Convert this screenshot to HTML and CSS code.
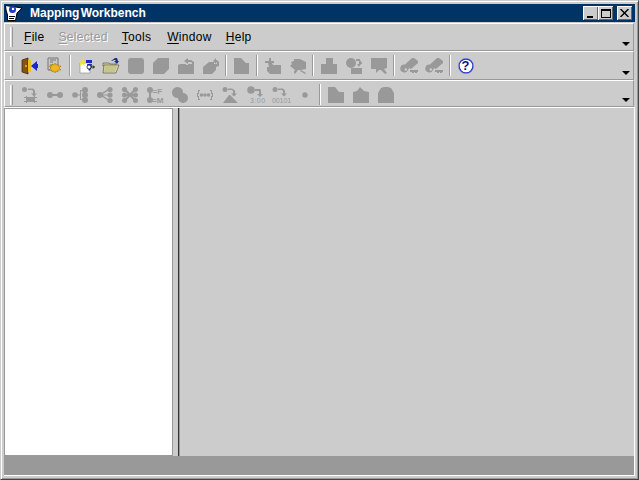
FILE: index.html
```html
<!DOCTYPE html>
<html lang="en">
<head>
<meta charset="utf-8">
<title>Mapping Workbench</title>
<link rel="stylesheet" href="styles.css">
</head>
<body>
<svg class="defs" width="0" height="0" aria-hidden="true">
  <defs>
    <g id="square"><rect x="0" y="0" width="16" height="16" rx="3"/></g>
    <g id="octa"><path d="M5 0h11v11l-5 5H0V5z"/></g>
    <g id="save"><path d="M0 7l2-1h6v1h2V6h6v10H0zM6 3l4-3v2h3l3 2v3h-2V5l-1-1h-3v2z"/></g>
    <g id="saveall"><path d="M0 9l6-5h5v2h5v2l-3 1v3l-4 4H0zM10 3l3-3v2h1l2 2v4h-2V5l-1-1v2z"/></g>
    <g id="doc"><path d="M0 0h7l5 5h3v11H0z"/></g>
    <g id="addtbl"><path d="M4 0h2v3h3v2H7l1 2h8v9H5l-3-3V9h2L3 5H0V3h4z"/></g>
    <g id="cam"><path d="M4 1l6 0 6 3v7l-5 1H5L0 8l2-2-1-2 3-1zM4 13l3-2 1 1-3 4-1-1zM11 12l5 3-1 1-5-3z"/></g>
    <g id="folder"><path d="M0 6h5V0h7v6h4v10H0z"/></g>
    <g id="bundle"><circle cx="5" cy="5" r="5"/><path d="M10 1h4v1l2 3v1h-1l-2 3-2-3h2V3h-3zM5 10h5l3 0h3v6H5z"/></g>
    <g id="chat"><path d="M0 0h16v10l-3 1 3 4-2 1-4-4H8l-3 3v-4H0z"/></g>
    <g id="key"><path d="M10 0h2l4 3v2l-7 6-2-1-1 2H6a4 4 0 1 1-3-5.500zM2.500 11.500a1.300 1.300 0 1 0 2.600 0 1.300 1.300 0 1 0-2.600 0zM8 12h8v2h-1v1h-2v-1h-1v1h-2v-1H8z" fill-rule="evenodd"/></g>
    <g id="map1"><circle cx="2.500" cy="2.500" r="2.500"/><path d="M6 1.500h5l2 2v3h2l-3 3-3-3h2V4l-1-1H6zM4 9h1v1h7V9h1v1h2v1h-2v3h2v1h-2v1h-1v-1H5v1H4v-1H2v-1h2v-3H2v-1h2z"/><path d="M5 10h7v4H5z"/></g>
    <g id="d2"><circle cx="3" cy="8" r="3"/><circle cx="13" cy="8" r="3"/><path d="M5 7h6v2H5z"/></g>
    <g id="d3"><circle cx="3" cy="8" r="2.800"/><circle cx="13" cy="3" r="3"/><circle cx="13" cy="8" r="3"/><circle cx="13" cy="13" r="3"/><path d="M5 7.500h3v1H5zM8 3h2v1H9v8h1v1H8z"/></g>
    <g id="d4"><circle cx="3" cy="8" r="3"/><circle cx="13" cy="2.500" r="2.600"/><circle cx="13" cy="8" r="2.600"/><circle cx="13" cy="13.500" r="2.600"/><path d="M4 6.600l7-4.600 .7 1.200-7 4.600zM4 7.500h7v1H4zM4.700 7.800l7 4.600-.7 1.200-7-4.600z"/></g>
    <g id="d5"><circle cx="2.500" cy="2.500" r="2.500"/><circle cx="13.500" cy="2.500" r="2.500"/><circle cx="2.500" cy="8" r="2.500"/><circle cx="13.500" cy="8" r="2.500"/><circle cx="2.500" cy="13.500" r="2.500"/><circle cx="13.500" cy="13.500" r="2.500"/><path d="M3 1l11 12-1 2L2 3zM13 1l1 2L3 15l-1-2zM3 7h10v2H3z"/></g>
    <g id="d6"><circle cx="3" cy="3" r="3"/><circle cx="3" cy="13" r="3"/><path d="M2 5h2v6H2z"/><text class="ic-text" x="5.500" y="7">=F</text><text class="ic-text" x="5" y="15.500">=M</text></g>
    <g id="d7"><circle cx="5.500" cy="5.500" r="5.500"/><circle cx="11" cy="11" r="5"/><path d="M2 7l5-5 7 7-5 5z"/></g>
    <g id="d8"><path d="M1 3h2v1H2v3H1v2h1v3h1v1H1v-3H0V6h1zM15 3h-2v1h1v3h1v2h-1v3h-1v1h2v-3h1V6h-1z"/><circle cx="4.500" cy="8" r="1.800"/><circle cx="8" cy="8" r="1.800"/><circle cx="11.500" cy="8" r="1.800"/></g>
    <g id="d9"><circle cx="3" cy="2.500" r="2.500"/><path d="M6 1.500h4l3 2v3h2l-3 3-3-3h2V4l-1-1H6zM8 8l8 8H1l6-8z"/></g>
    <g id="d10"><circle cx="4" cy="3" r="3.800"/><path d="M8 2h5l1 1v4h2l-3 3-3-3h2V4h-4z"/><text class="ic-text ic-small" x="3" y="16">3:00</text></g>
    <g id="d11"><circle cx="3" cy="2.500" r="2.500"/><path d="M6 1.500h5l2 2v3h2l-3 3-3-3h2V4l-1-1H6z"/><text class="ic-text ic-small ic-tight" x="0" y="16">00101</text></g>
    <g id="dot"><circle cx="8" cy="8" r="2.700"/></g>
    <g id="f1"><path d="M0 0h7l4 5h5v11H0z"/></g>
    <g id="f2"><path d="M0 5l4-1 3-4 4 4 5 1v11H0z"/></g>
    <g id="f3"><path d="M0 6l3-5 3-1h4l3 1 3 5v10H0z"/></g>
  </defs>
</svg>
<div class="window">
  <header class="titlebar">
    <svg class="logo" viewBox="0 0 18 18" width="18" height="18" aria-hidden="true">
      <path d="M1.500 1.500L18 4l-5 5-1.500 7.500H3.500V11L2 6z" fill="#fff" stroke="#000" stroke-width="1"/>
      <circle cx="8.500" cy="5.500" r="3.500" fill="#1f38c0"/>
      <circle cx="9" cy="5" r="1.200" fill="#fff"/>
      <path d="M5 12.500h6M5 14.500h5" stroke="#000" stroke-width="1"/>
    </svg>
    <span class="title">Mapping Workbench</span>
    <div class="winbtns">
      <button class="winbtn" type="button" aria-label="Minimize"><span class="min-glyph"></span></button>
      <button class="winbtn" type="button" aria-label="Maximize"><span class="max-glyph"></span></button>
      <button class="winbtn close" type="button" aria-label="Close">
        <svg viewBox="0 0 9 8" width="9" height="8" aria-hidden="true"><path d="M0.500 0L8.500 8M8.500 0L0.500 8" fill="none" stroke="#000" stroke-width="1.400"/></svg>
      </button>
    </div>
  </header>

  <nav class="bar menubar">
    <span class="grip"></span>
    <span class="menu m-file"><u>F</u>ile</span>
    <span class="menu m-selected is-disabled"><u>S</u>elected</span>
    <span class="menu m-tools"><u>T</u>ools</span>
    <span class="menu m-window"><u>W</u>indow</span>
    <span class="menu m-help"><u>H</u>elp</span>
    <span class="overflow"></span>
  </nav>

  <div class="bar toolbar">
    <span class="grip"></span>
    <span class="tool">
      <svg class="ic" viewBox="0 0 16 16" aria-hidden="true">
        <path d="M0 2l6-2v16l-6-2z" fill="#8a5410" stroke="#3a2000" stroke-width=".7"/>
        <path d="M6 2h3v12H6z" fill="#f0c020"/><circle cx="4" cy="8" r=".9" fill="#f0d040"/>
        <path d="M9 8l6-5v3h1v4h-1v3z" fill="#1a2ac0"/>
      </svg>
    </span>
    <span class="tool">
      <svg class="ic" viewBox="0 0 16 16" aria-hidden="true">
        <path d="M1 0h10v12H1z" fill="#c8c8c8" stroke="#777" stroke-width="1"/>
        <path d="M3 2h6M3 4h3M3 7h3M3 10h2" stroke="#777" stroke-width="1"/>
        <path d="M8 5l1 2 2-1 0 2 3 0-2 2 2 2-3 0 0 2-2-1-1 2-1-2-2 1 0-2-3 0 2-2-2-2 3 0 0-2 2 1z" fill="#eeb818" stroke="#a06810" stroke-width=".5"/>
      </svg>
    </span>
    <span class="sep"></span>
    <span class="tool">
      <svg class="ic ic-wide" viewBox="0 0 16 16" aria-hidden="true">
        <path d="M1 5h10v10H1z" fill="#fff" stroke="#888" stroke-width=".6"/>
        <path d="M3 0l1 3 3-1-2 2 3 1-3 1 1 2-3-2-2 2 0-3-1-1 2-1z" fill="#f0e040"/>
        <path d="M7 2h6v3H7z" fill="#1a2ac0"/><path d="M8 6h5l-1 5-2 2-1-3z" fill="#1a2ac0"/>
        <circle cx="10" cy="9" r="2" fill="#fff" stroke="#000" stroke-width=".7"/>
        <path d="M12 9h3M14 7.500l1.500 1.500-1.500 1.500" fill="none" stroke="#000" stroke-width=".9"/>
      </svg>
    </span>
    <span class="tool">
      <svg class="ic" viewBox="0 0 16 16" aria-hidden="true">
        <path d="M0 5h6l1 1h6v2H0z" fill="#e8d088" stroke="#555" stroke-width=".7"/>
        <path d="M0 15l1-8h15l-3 8z" fill="#e8d898" stroke="#555" stroke-width=".7"/>
        <path d="M2 8h12l-2 6H1z" fill="#c0c890"/>
        <path d="M8 3l4-3h2l1 3h1l-2 3-3-3h2l-1-1h-1l-2 1z" fill="#1a3080"/>
      </svg>
    </span>
    <span class="tool is-off"><svg class="ic" viewBox="0 0 16 16" aria-hidden="true"><use href="#square"/></svg></span>
    <span class="tool is-off"><svg class="ic" viewBox="0 0 16 16" aria-hidden="true"><use href="#octa"/></svg></span>
    <span class="tool is-off"><svg class="ic" viewBox="0 0 16 16" aria-hidden="true"><use href="#save"/></svg></span>
    <span class="tool is-off"><svg class="ic" viewBox="0 0 16 16" aria-hidden="true"><use href="#saveall"/></svg></span>
    <span class="sep"></span>
    <span class="tool is-off"><svg class="ic" viewBox="0 0 16 16" aria-hidden="true"><use href="#doc"/></svg></span>
    <span class="sep"></span>
    <span class="tool is-off"><svg class="ic" viewBox="0 0 16 16" aria-hidden="true"><use href="#addtbl"/></svg></span>
    <span class="tool is-off"><svg class="ic" viewBox="0 0 16 16" aria-hidden="true"><use href="#cam"/></svg></span>
    <span class="sep"></span>
    <span class="tool is-off"><svg class="ic" viewBox="0 0 16 16" aria-hidden="true"><use href="#folder"/></svg></span>
    <span class="tool is-off"><svg class="ic" viewBox="0 0 16 16" aria-hidden="true"><use href="#bundle"/></svg></span>
    <span class="tool is-off"><svg class="ic" viewBox="0 0 16 16" aria-hidden="true"><use href="#chat"/></svg></span>
    <span class="sep"></span>
    <span class="tool is-off"><svg class="ic" viewBox="0 0 16 16" aria-hidden="true"><use href="#key"/></svg></span>
    <span class="tool is-off"><svg class="ic" viewBox="0 0 16 16" aria-hidden="true"><use href="#key"/></svg></span>
    <span class="sep"></span>
    <span class="tool">
      <svg class="ic" viewBox="0 0 16 16" aria-hidden="true">
        <circle cx="8" cy="8" r="7" fill="#fff" stroke="#2030c0" stroke-width="1.400"/>
        <circle cx="8" cy="8" r="7.700" fill="none" stroke="#a0a8e0" stroke-width=".5"/>
      </svg>
      <span class="help-mark">?</span>
    </span>
    <span class="overflow"></span>
  </div>

  <div class="bar toolbar toolbar-last">
    <span class="grip"></span>
    <span class="tool is-off"><svg class="ic" viewBox="0 0 16 16" aria-hidden="true"><use href="#map1"/></svg></span>
    <span class="tool is-off"><svg class="ic" viewBox="0 0 16 16" aria-hidden="true"><use href="#d2"/></svg></span>
    <span class="tool is-off"><svg class="ic" viewBox="0 0 16 16" aria-hidden="true"><use href="#d3"/></svg></span>
    <span class="tool is-off"><svg class="ic" viewBox="0 0 16 16" aria-hidden="true"><use href="#d4"/></svg></span>
    <span class="tool is-off"><svg class="ic" viewBox="0 0 16 16" aria-hidden="true"><use href="#d5"/></svg></span>
    <span class="tool is-off"><svg class="ic" viewBox="0 0 16 16" aria-hidden="true"><use href="#d6"/></svg></span>
    <span class="tool is-off"><svg class="ic" viewBox="0 0 16 16" aria-hidden="true"><use href="#d7"/></svg></span>
    <span class="tool is-off"><svg class="ic" viewBox="0 0 16 16" aria-hidden="true"><use href="#d8"/></svg></span>
    <span class="tool is-off"><svg class="ic" viewBox="0 0 16 16" aria-hidden="true"><use href="#d9"/></svg></span>
    <span class="tool is-off"><svg class="ic" viewBox="0 0 16 16" aria-hidden="true"><use href="#d10"/></svg></span>
    <span class="tool is-off"><svg class="ic" viewBox="0 0 16 16" aria-hidden="true"><use href="#d11"/></svg></span>
    <span class="tool is-off"><svg class="ic" viewBox="0 0 16 16" aria-hidden="true"><use href="#dot"/></svg></span>
    <span class="sep"></span>
    <span class="tool is-off"><svg class="ic" viewBox="0 0 16 16" aria-hidden="true"><use href="#f1"/></svg></span>
    <span class="tool is-off"><svg class="ic" viewBox="0 0 16 16" aria-hidden="true"><use href="#f2"/></svg></span>
    <span class="tool is-off"><svg class="ic" viewBox="0 0 16 16" aria-hidden="true"><use href="#f3"/></svg></span>
    <span class="overflow"></span>
  </div>

  <main class="split">
    <div class="tree"></div>
    <div class="divider"></div>
    <div class="desktop"></div>
  </main>

  <footer class="status"></footer>
</div>
</body>
</html>
```
FILE: styles.css
```css
* { box-sizing: border-box; }
html, body { margin: 0; padding: 0; height: 100%; }
body { width: 639px; height: 480px; overflow: hidden; background: #ccc; font-family: "Liberation Sans", Arial, sans-serif; }
.defs { position: absolute; }

.window {
  width: 639px; height: 480px;
  display: flex; flex-direction: column;
  background: #ccc;
  padding: 4px 3px 3px 3px;
  border-top: 1px solid #ccc;
  border-left: 1px solid #ccc;
  border-right: 1px solid #444;
  border-bottom: 1px solid #444;
  box-shadow: inset 1px 1px 0 #fff, inset -1px -1px 0 #999;
}

.titlebar {
  height: 18px; margin: -1px 0 1px 0; flex: none;
  display: flex; align-items: center;
  background: #036;
  color: #fff;
}
.logo { flex: none; }
.title { margin-left: 8px; font-size: 12px; font-weight: 700; word-spacing: -2px; }
.winbtns { margin-left: auto; margin-right: 3px; display: flex; }
.winbtn {
  width: 15px; height: 14px; padding: 0; border: 0;
  background: #ccc;
  display: flex; align-items: center; justify-content: center;
  box-shadow: inset 1px 1px 0 #fff, inset -1px -1px 0 #666;
}
.winbtn.close { margin-left: 4px; }
.min-glyph { width: 6px; height: 2px; background: #000; align-self: flex-end; margin: 0 2px 2px 0; }
.max-glyph { width: 10px; height: 9px; border: 1px solid #000; border-top-width: 2px; }

.bar {
  flex: none; display: flex; align-items: center;
  position: relative;
  padding-left: 5px;
  margin-right: 1px;
  border-top: 1px solid #fff;
  border-left: 1px solid #fff;
  border-right: 1px solid #999;
  border-bottom: 1px solid #999;
}
.menubar { height: 28px; }
.toolbar { height: 29px; }
.toolbar-last { height: 27px; padding-top: 2px; }

.grip { flex: none; width: 3px; height: 20px; background: #ddd; border-left: 1px solid #fff; border-right: 1px solid #999; }

.menu { font-size: 12px; color: #000; letter-spacing: .3px; line-height: 14px; }
.menu u { text-decoration-thickness: 1px; text-underline-offset: 2px; }
.m-file { margin-left: 11px; }
.m-selected { margin-left: 14px; }
.m-tools { margin-left: 14px; }
.m-window { margin-left: 16px; }
.m-help { margin-left: 14px; }
.is-disabled { color: #999; text-shadow: 1px 1px 0 #fff; }

.overflow {
  position: absolute; right: 3px; bottom: 4px;
  width: 0; height: 0;
  border-left: 4px solid transparent;
  border-right: 4px solid transparent;
  border-top: 4px solid #000;
}

.tool { flex: none; width: 25px; height: 21px; display: flex; align-items: center; justify-content: center; position: relative; color: #999; }
.grip + .tool { margin-left: 4px; }
.ic { width: 16px; height: 16px; display: block; fill: currentColor; overflow: visible; }
.ic-wide { margin-left: 3px; }
.ic-text { font-family: "Liberation Sans", Arial, sans-serif; font-size: 8px; font-weight: 700; }
.ic-small { font-size: 7px; letter-spacing: .5px; font-weight: 400; }
.ic-tight { letter-spacing: -.1px; }
.is-off { color: #999; }
.help-mark { position: absolute; inset: 0; display: flex; align-items: center; justify-content: center; font-size: 13px; font-weight: 700; color: #10108a; }

.sep { flex: none; width: 6px; height: 21px; display: flex; justify-content: center; }
.sep::before { content: ""; width: 2px; height: 100%; background: linear-gradient(90deg, #999 50%, #fff 50%); }

.split { flex: 1; min-height: 0; display: flex; border-top: 1px solid #fff; border-right: 1px solid #fff; }
.tree { width: 169px; background: #fff; border: 1px solid #999; }
.divider { width: 5px; }
.desktop { flex: 1; background: #ccc; border-left: 1px solid #333; box-shadow: inset 1px 0 0 #999; }

.status { flex: none; height: 20px; background: #999; border-bottom: 1px solid #fff; border-right: 1px solid #fff; }
```
